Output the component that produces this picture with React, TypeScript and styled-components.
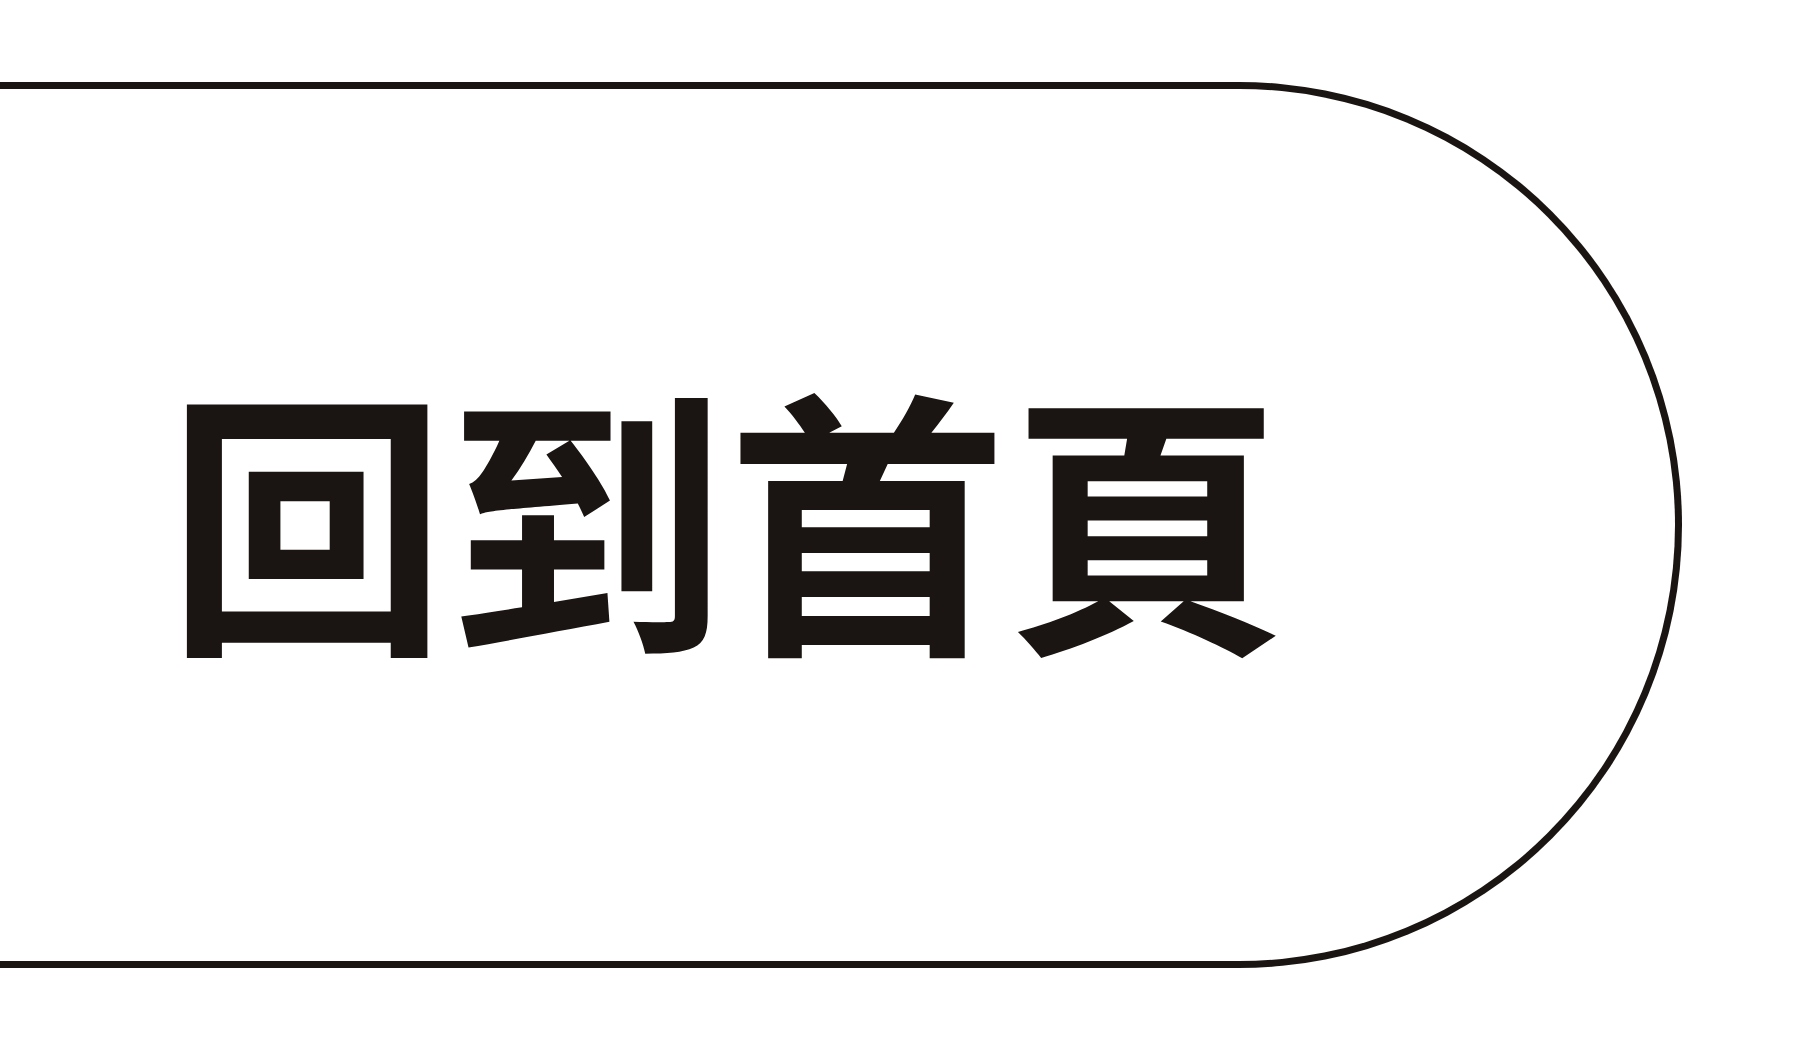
import React from "react";
import styled, { createGlobalStyle } from "styled-components";

const GlobalStyle = createGlobalStyle`
  html, body {
    margin: 0;
    padding: 0;
    background: #ffffff;
  }
  * {
    box-sizing: border-box;
  }
`;

const Page = styled.div`
  width: 1797px;
  height: 1050px;
  padding-top: 82px;
  background: #ffffff;
  overflow: hidden;
`;

const HomeButton = styled.button`
  display: flex;
  align-items: center;
  width: 1682px;
  height: 886px;
  margin: 0;
  padding: 0 0 28px 167px;
  background: transparent;
  border: 7px solid #1a1512;
  border-left: none;
  border-radius: 0 443px 443px 0;
  cursor: pointer;
  &:focus {
    outline: none;
  }
`;

const Label = styled.span`
  font-family: "Noto Sans CJK TC", "Noto Sans CJK SC", sans-serif;
  font-weight: 700;
  font-size: 280px;
  line-height: 1;
  color: #1a1512;
  white-space: nowrap;
`;

export default function App() {
  return (
    <>
      <GlobalStyle />
      <Page>
        <HomeButton type="button">
          <Label>回到首頁</Label>
        </HomeButton>
      </Page>
    </>
  );
}
